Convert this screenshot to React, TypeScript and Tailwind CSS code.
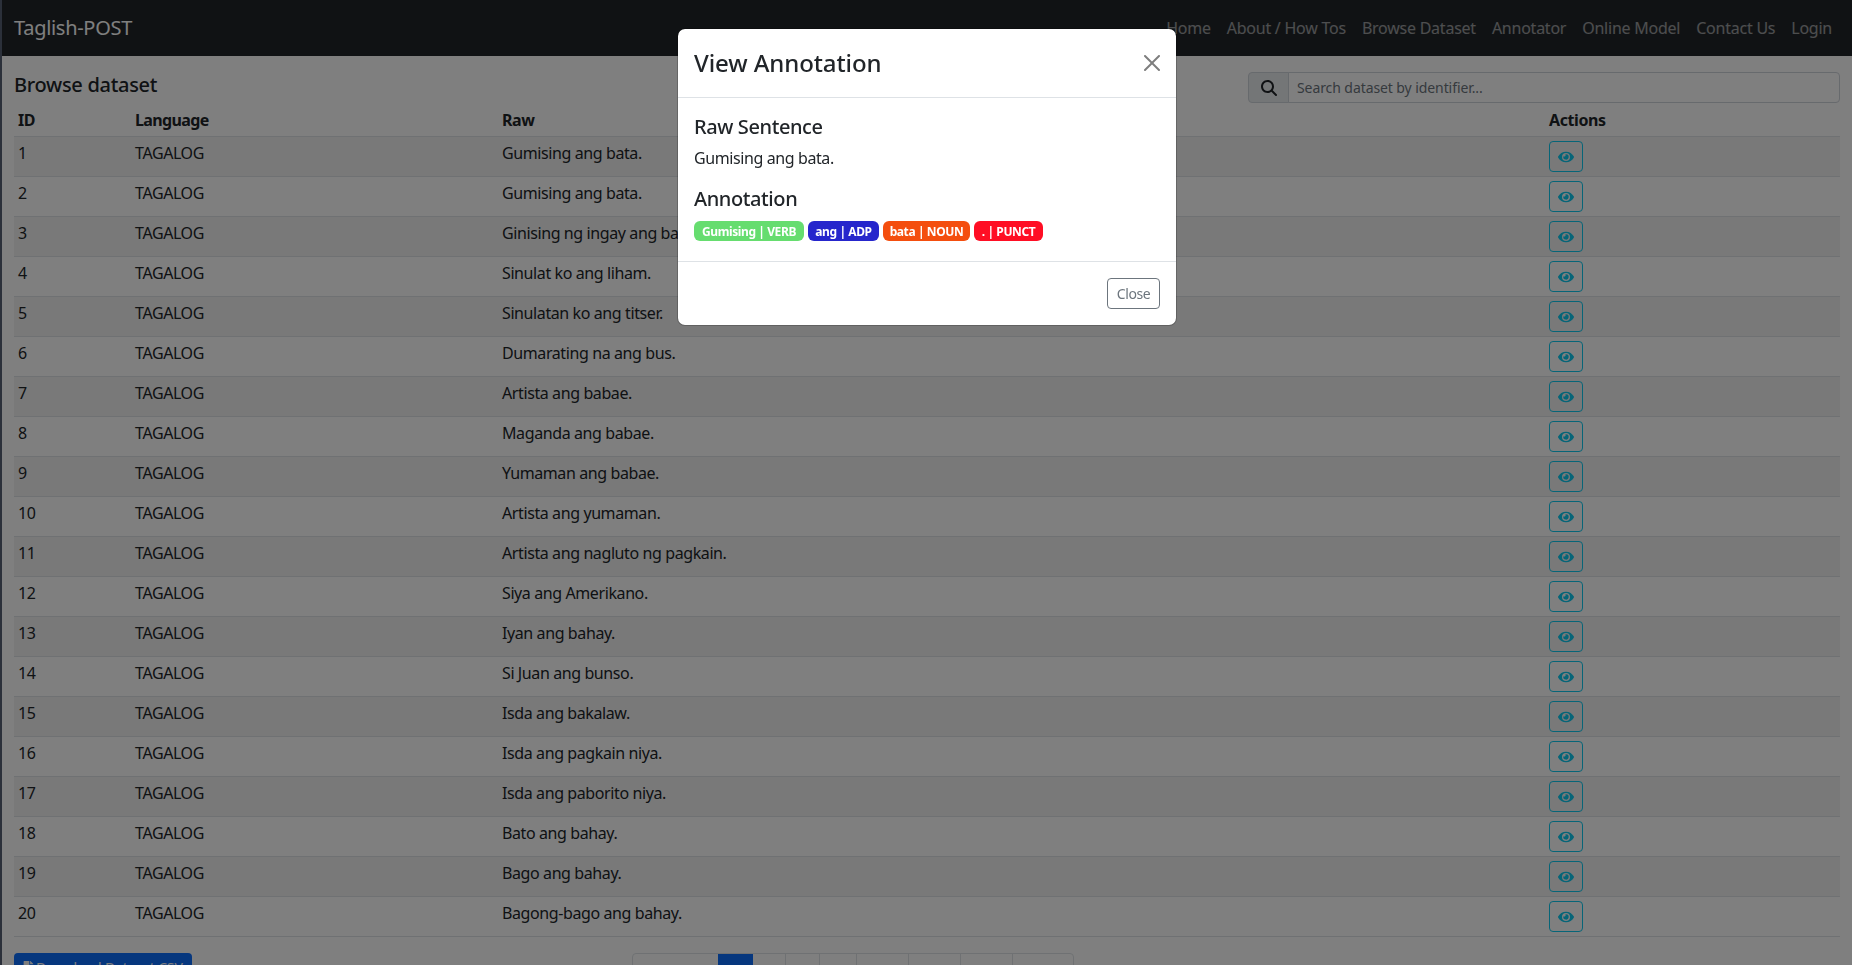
import React from "react";
import { FaEye, FaFileAlt } from "react-icons/fa";
import { FaMagnifyingGlass } from "react-icons/fa6";

const rows = [
  "Gumising ang bata.",
  "Gumising ang bata.",
  "Ginising ng ingay ang bata.",
  "Sinulat ko ang liham.",
  "Sinulatan ko ang titser.",
  "Dumarating na ang bus.",
  "Artista ang babae.",
  "Maganda ang babae.",
  "Yumaman ang babae.",
  "Artista ang yumaman.",
  "Artista ang nagluto ng pagkain.",
  "Siya ang Amerikano.",
  "Iyan ang bahay.",
  "Si Juan ang bunso.",
  "Isda ang bakalaw.",
  "Isda ang pagkain niya.",
  "Isda ang paborito niya.",
  "Bato ang bahay.",
  "Bago ang bahay.",
  "Bagong-bago ang bahay.",
];

const links = ["Home", "About / How Tos", "Browse Dataset", "Annotator", "Online Model", "Contact Us", "Login"];

export default function App() {
  return (
    <div className="relative flex h-screen overflow-hidden bg-white font-['Noto_Sans',sans-serif] tracking-[-0.025em] text-[#212529]">
      <div className="w-[2px] shrink-0 bg-[#566175]" />
      <div className="min-w-0 flex-1">
        <nav className="flex h-14 items-center justify-between bg-[#212529] px-3">
          <span className="text-xl tracking-[-0.015em] text-white">Taglish-POST</span>
          <div className="flex tracking-[-0.015em]">
            {links.map((l) => (
              <a key={l} className="px-2 text-base text-white/55">
                {l}
              </a>
            ))}
          </div>
        </nav>
        <main className="px-3 pt-4">
          <div className="mb-px flex items-start justify-between">
            <h5 className="text-xl leading-[26px] font-medium tracking-[-0.015em]">Browse dataset</h5>
            <div className="flex h-[31px] w-[592px]">
              <span className="flex w-[41px] shrink-0 items-center justify-center rounded-l border border-[#ced4da] bg-[#e9ecef]">
                <FaMagnifyingGlass size={16} />
              </span>
              <input
                readOnly
                placeholder="Search dataset by identifier..."
                className="-ml-px min-w-0 flex-1 rounded-r border border-[#ced4da] bg-white px-2 text-sm tracking-[-0.006em] placeholder:text-[#6c757d]"
              />
            </div>
          </div>
          <table className="w-full table-fixed">
            <colgroup>
              <col className="w-[117px]" />
              <col className="w-[367px]" />
              <col className="w-[1047px]" />
              <col />
            </colgroup>
            <thead>
              <tr className="border-b border-[#dee2e6] text-left">
                <th className="p-1 font-bold">ID</th>
                <th className="p-1 font-bold tracking-[-0.04em]">Language</th>
                <th className="p-1 font-bold">Raw</th>
                <th className="p-1 font-bold">Actions</th>
              </tr>
            </thead>
            <tbody>
              {rows.map((r, i) => (
                <tr key={i} className={`border-b border-[#dee2e6] ${i % 2 === 0 ? "bg-[#f2f2f2]" : ""}`}>
                  <td className="p-1 align-top">{i + 1}</td>
                  <td className="p-1 align-top">TAGALOG</td>
                  <td className="p-1 align-top">{r}</td>
                  <td className="p-1 align-top">
                    <button className="flex h-[31px] w-[34px] items-center justify-center rounded border border-[#0dcaf0] text-[#0dcaf0]">
                      <FaEye size={16} />
                    </button>
                  </td>
                </tr>
              ))}
            </tbody>
          </table>
          <div className="mt-4 flex items-start">
            <button className="flex h-[38px] w-[178px] items-start gap-px rounded bg-[#0d6efd] px-2 pt-[5px] text-sm tracking-[-0.01em] whitespace-nowrap text-white">
              <FaFileAlt size={13} className="mt-[3px] shrink-0" />
              Download Dataset CSV
            </button>
            <ul className="ml-[440px] flex h-[38px] rounded border border-[#dee2e6] text-[#0d6efd]">
              {[
                ["Previous", "w-[85px] border-r-0"],
                ["1", "w-[35px] border-r-0 bg-[#0d6efd] text-white"],
                ["2", "w-[33px]"],
                ["3", "w-[34px]"],
                ["4", "w-[37px]"],
                ["5", "w-[52px]"],
                ["6", "w-[52px]"],
                ["7", "w-[52px]"],
                ["Next", "w-[60px] border-r-0"],
              ].map(([t, c]) => (
                <li key={t} className={`${c} border-r border-[#dee2e6] pt-[7px] text-center`}>
                  {t}
                </li>
              ))}
            </ul>
          </div>
        </main>
      </div>

      <div className="fixed inset-0 bg-black/50" />
      <div className="fixed top-7 left-[677px] box-border w-[500px] rounded-lg border border-black/20 bg-white bg-clip-padding text-[#212529]">
        <div className="flex h-[69px] items-center justify-between border-b border-[#dee2e6] px-4">
          <h1 className="text-2xl font-medium tracking-[-0.004em]">View Annotation</h1>
          <svg viewBox="0 0 16 16" className="h-4 w-4 fill-black opacity-50">
            <path d="M.293.293a1 1 0 0 1 1.414 0L8 6.586 14.293.293a1 1 0 1 1 1.414 1.414L9.414 8l6.293 6.293a1 1 0 0 1-1.414 1.414L8 9.414l-6.293 6.293a1 1 0 0 1-1.414-1.414L6.586 8 .293 1.707a1 1 0 0 1 0-1.414z" />
          </svg>
        </div>
        <div className="border-b border-[#dee2e6] px-4 pt-4 pb-5">
          <h5 className="mt-px mb-[7px] text-xl leading-6 font-medium">Raw Sentence</h5>
          <p className="mb-[17px] text-base">Gumising ang bata.</p>
          <h5 className="mb-[10px] text-xl leading-6 font-medium">Annotation</h5>
          <div className="flex h-5 gap-1 text-xs leading-[22px] font-bold text-white">
            <span className="w-[110px] rounded-md bg-[#66dd6f] text-center">Gumising | VERB</span>
            <span className="w-[71px] rounded-md bg-[#2626cc] text-center">ang | ADP</span>
            <span className="w-[87px] rounded-md bg-[#f44e0e] text-center">bata | NOUN</span>
            <span className="w-[69px] rounded-md bg-[#ff0e24] text-center">. | PUNCT</span>
          </div>
        </div>
        <div className="flex justify-end p-4">
          <button className="h-[31px] w-[53px] rounded border border-[#6c757d] text-sm text-[#6c757d]">Close</button>
        </div>
      </div>
    </div>
  );
}
